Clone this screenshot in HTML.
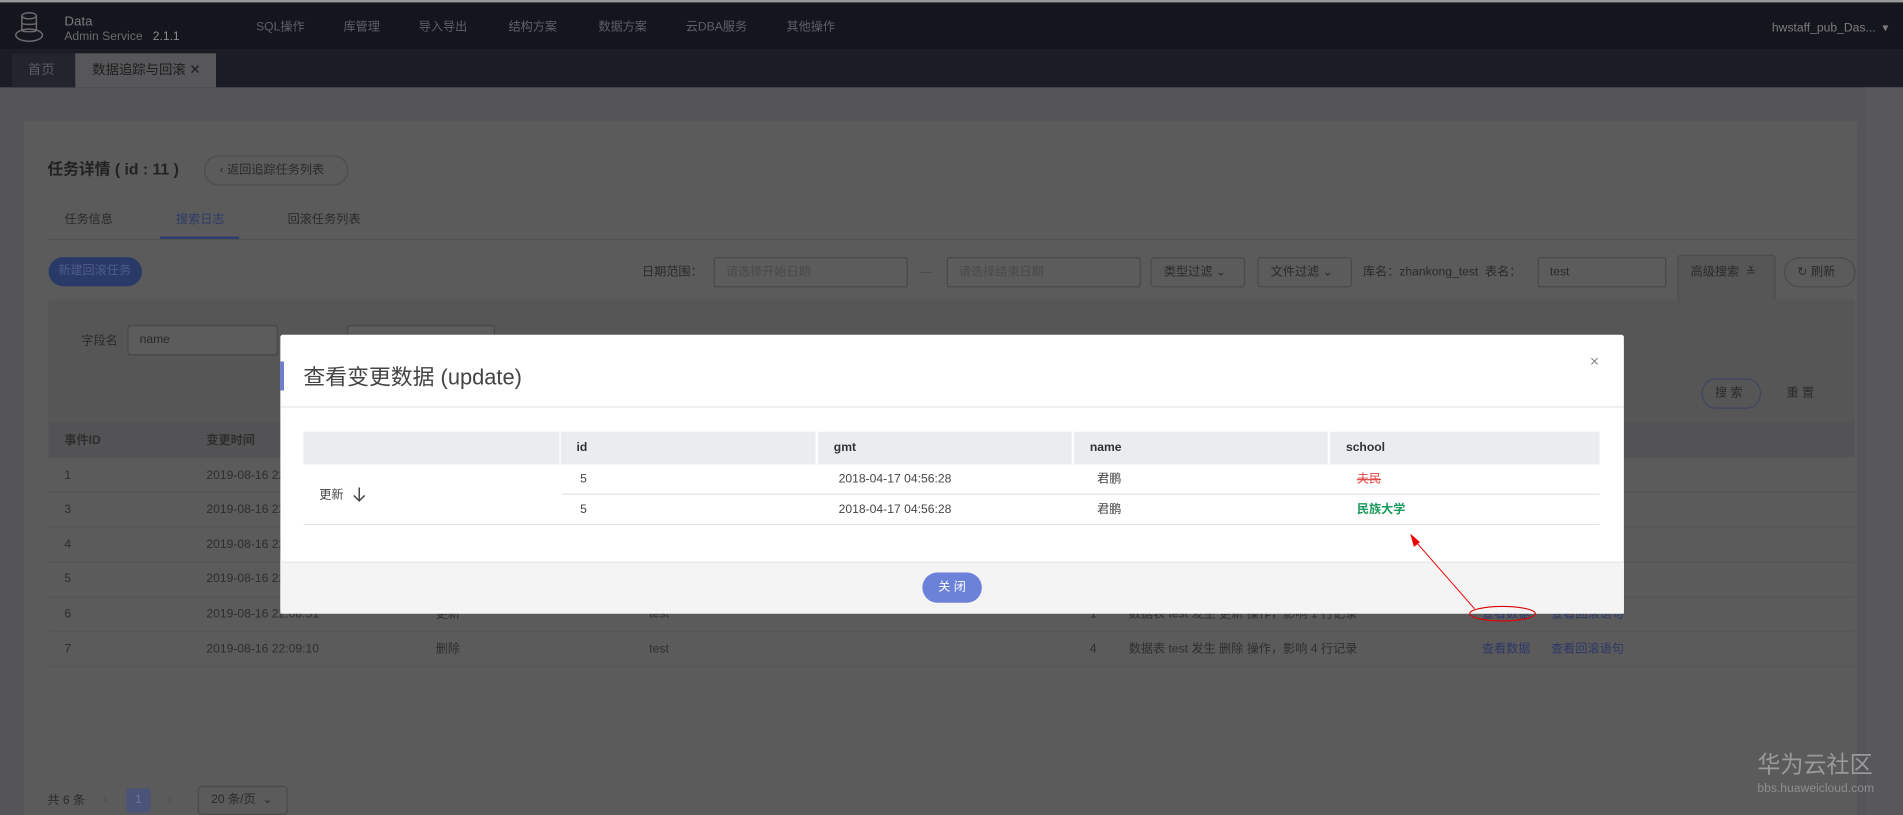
<!DOCTYPE html>
<html><head><meta charset="utf-8">
<style>
*{box-sizing:border-box;margin:0;padding:0}
html,body{width:1903px;height:815px;overflow:hidden;background:#555558}
#s{position:absolute;left:0;top:0;width:1568px;height:672px;transform:scale(1.21365,1.21280);transform-origin:0 0;font-family:"Liberation Sans","Noto Sans CJK SC",sans-serif;font-size:10px;color:#2a2a2a;line-height:1.15}
.a{position:absolute;white-space:nowrap}
.f{display:flex;align-items:center}
.nav{left:0;top:0;width:1568px;height:41px;background:#15161d;border-top:2px solid #999}
.m{top:17px;color:#5e6068;font-size:10px}
.inp{border:1px solid #484848;border-radius:2px;background:#5c5c5c;height:25px;color:#444;padding:0 9px;font-size:10px;display:flex;align-items:center}
.btn{border:1px solid #4a4a4a;border-radius:3px;height:25px;padding:0 10px;font-size:10px;color:#2a2a2a;display:flex;align-items:center}
.row{left:40px;width:1488px;height:29px;border-bottom:1px solid #555}
.c{font-size:10px;color:#2e2e2e}
.mh{top:356px;height:27px;background:#eaecf0}
</style></head><body><div id="s">
<div class="a nav"></div>
<svg class="a" style="left:11px;top:8px" width="26" height="28" viewBox="0 0 26 28" fill="none" stroke="#6a6a70" stroke-width="1.2"><ellipse cx="13" cy="5" rx="6" ry="2.5"/><path d="M7 5v12M19 5v12M7 11c0 1.5 12 1.5 12 0M7 17c0 1.5 12 1.5 12 0"/><ellipse cx="13" cy="21" rx="11" ry="5"/></svg>
<div class="a" style="left:53px;top:12px;color:#7a7a80;font-size:11px">Data</div>
<div class="a" style="left:53px;top:25px;color:#6a6a70;font-size:10px">Admin Service &nbsp;&nbsp;<span style="color:#8a8a90">2.1.1</span></div>
<div class="a m" style="left:211px">SQL操作</div><div class="a m" style="left:283px">库管理</div><div class="a m" style="left:345px">导入导出</div><div class="a m" style="left:419px">结构方案</div><div class="a m" style="left:493px">数据方案</div><div class="a m" style="left:565px">云DBA服务</div><div class="a m" style="left:648px">其他操作</div>
<div class="a" style="left:1460px;top:18px;color:#7c7c80;font-size:10px">hwstaff_pub_Das... &nbsp;▾</div>
<div class="a" style="left:0;top:41px;width:1568px;height:31px;background:#1b1c25"></div>
<div class="a f" style="left:10px;top:44px;width:52px;height:28px;background:#23242e;color:#5c5c64;padding:0 13px;font-size:11px">首页</div>
<div class="a f" style="left:62px;top:44px;width:116px;height:28px;background:#57575a;color:#1e1e1e;padding:0 14px;font-size:11px">数据追踪与回滚 ✕</div>
<div class="a" style="left:1538px;top:72px;width:30px;height:600px;background:#58585b"></div>
<div class="a" style="left:20px;top:100px;width:1510px;height:572px;background:#5b5b5c"></div>
<div class="a" style="left:39px;top:133px;font-size:13px;font-weight:bold;color:#222">任务详情 ( id : 11 )</div>
<div class="a f" style="left:168px;top:128px;width:119px;height:25px;border:1px solid #4c4c4c;border-radius:13px;padding:0 12px;font-size:10px;color:#2a2a2a">‹ 返回追踪任务列表</div>
<div class="a" style="left:53px;top:176px">任务信息</div>
<div class="a" style="left:145px;top:176px;color:#2d3a66">搜索日志</div>
<div class="a" style="left:237px;top:176px">回滚任务列表</div>
<div class="a" style="left:39px;top:197px;width:1489px;height:1px;background:#525252"></div>
<div class="a" style="left:132px;top:195px;width:65px;height:2px;background:#2e3d70"></div>
<div class="a f" style="left:40px;top:212px;width:77px;height:24px;background:#2a3a68;border-radius:12px;color:#4e5c86;padding:0 8px;font-size:10px">新建回滚任务</div>
<div class="a" style="left:529px;top:219px">日期范围：</div>
<div class="a inp" style="left:588px;top:212px;width:160px;color:#4a4a4a">请选择开始日期</div>
<div class="a" style="left:758px;top:219px;color:#4a4a4a">—</div>
<div class="a inp" style="left:780px;top:212px;width:160px;color:#4a4a4a">请选择结束日期</div>
<div class="a btn" style="left:948px;top:212px;width:78px">类型过滤 ⌄</div>
<div class="a btn" style="left:1036px;top:212px;width:78px">文件过滤 ⌄</div>
<div class="a" style="left:1123px;top:219px">库名：zhankong_test &nbsp;表名：</div>
<div class="a inp" style="left:1267px;top:212px;width:106px;color:#2a2a2a">test</div>
<div class="a" style="left:40px;top:247px;width:1488px;height:129px;background:#565657"></div>
<div class="a btn" style="left:1382px;top:210px;width:81px;height:38px;background:#565657;border-bottom:none;padding-bottom:10px">高级搜索 &nbsp;≚</div>
<div class="a btn" style="left:1470px;top:212px;width:59px;border-radius:13px">↻ 刷新</div>
<div class="a" style="left:67px;top:276px">字段名</div>
<div class="a inp" style="left:105px;top:268px;width:124px;color:#2a2a2a">name</div>
<div class="a inp" style="left:286px;top:268px;width:122px"></div>
<div class="a btn" style="left:1402px;top:312px;width:49px;border-radius:12px;border-color:#3f4660">搜 索</div>
<div class="a btn" style="left:1461px;top:312px;width:48px;border-radius:8px;border-color:#555">重 置</div>
<div class="a" style="left:40px;top:348px;width:1488px;height:29px;background:#535355"></div>
<div class="a c" style="left:53px;top:358px;font-weight:bold">事件ID</div><div class="a c" style="left:170px;top:358px;font-weight:bold">变更时间</div>
<div class="a row" style="top:377px"></div><div class="a c" style="left:53px;top:387px">1</div><div class="a c" style="left:170px;top:387px">2019-08-16 22:09:10</div>
<div class="a row" style="top:406px"></div><div class="a c" style="left:53px;top:415px">3</div><div class="a c" style="left:170px;top:415px">2019-08-16 22:09:10</div>
<div class="a row" style="top:435px"></div><div class="a c" style="left:53px;top:444px">4</div><div class="a c" style="left:170px;top:444px">2019-08-16 22:09:10</div>
<div class="a row" style="top:464px"></div><div class="a c" style="left:53px;top:472px">5</div><div class="a c" style="left:170px;top:472px">2019-08-16 22:09:10</div>
<div class="a row" style="top:492px"></div><div class="a c" style="left:53px;top:501px">6</div><div class="a c" style="left:170px;top:501px">2019-08-16 22:08:51</div><div class="a c" style="left:359px;top:501px">更新</div><div class="a c" style="left:535px;top:501px">test</div><div class="a c" style="left:898px;top:501px">1</div><div class="a c" style="left:930px;top:501px">数据表 test 发生 更新 操作，影响 1 行记录</div><div class="a c" style="left:1221px;top:501px;color:#2d3766">查看数据</div><div class="a c" style="left:1278px;top:501px;color:#2d3766">查看回滚语句</div>
<div class="a row" style="top:521px"></div><div class="a c" style="left:53px;top:530px">7</div><div class="a c" style="left:170px;top:530px">2019-08-16 22:09:10</div><div class="a c" style="left:359px;top:530px">删除</div><div class="a c" style="left:535px;top:530px">test</div><div class="a c" style="left:898px;top:530px">4</div><div class="a c" style="left:930px;top:530px">数据表 test 发生 删除 操作，影响 4 行记录</div><div class="a c" style="left:1221px;top:530px;color:#2d3766">查看数据</div><div class="a c" style="left:1278px;top:530px;color:#2d3766">查看回滚语句</div>
<div class="a" style="left:39px;top:655px">共 6 条</div>
<div class="a" style="left:85px;top:654px;color:#4e4e4e">‹</div>
<div class="a f" style="left:104px;top:650px;width:20px;height:20px;background:#4a5478;border-radius:2px;color:#6c76a0;justify-content:center">1</div>
<div class="a" style="left:138px;top:654px;color:#4e4e4e">›</div>
<div class="a btn" style="left:163px;top:648px;width:74px;height:24px">20 条/页 &nbsp;⌄</div>
<div class="a" style="left:1448px;top:621px;font-size:19px;color:#9a9a9c">华为云社区</div>
<div class="a" style="left:1448px;top:645px;font-size:10px;color:#8e8e90">bbs.huaweicloud.com</div>
<!-- modal -->
<div class="a" style="left:231px;top:276px;width:1107px;height:230px;background:#fff;border-radius:2px"></div>
<div class="a" style="left:231px;top:298px;width:3px;height:24px;background:#6a7fd2"></div>
<div class="a" style="left:250px;top:301px;font-size:18px;color:#444">查看变更数据 (update)</div>
<div class="a" style="left:1310px;top:291px;font-size:13px;color:#888">×</div>
<div class="a" style="left:231px;top:335px;width:1107px;height:1px;background:#e6e6e6"></div>
<div class="a mh" style="left:250px;width:211px"></div><div class="a mh" style="left:462px;width:210px"></div><div class="a mh" style="left:674px;width:209px"></div><div class="a mh" style="left:885px;width:209px"></div><div class="a mh" style="left:1096px;width:222px"></div>
<div class="a" style="left:475px;top:364px;font-weight:bold;color:#333">id</div>
<div class="a" style="left:687px;top:364px;font-weight:bold;color:#333">gmt</div>
<div class="a" style="left:898px;top:364px;font-weight:bold;color:#333">name</div>
<div class="a" style="left:1109px;top:364px;font-weight:bold;color:#333">school</div>
<div class="a" style="left:463px;top:407px;width:855px;height:1px;background:#e4e4e4"></div>
<div class="a" style="left:250px;top:432px;width:1068px;height:1px;background:#e4e4e4"></div>
<div class="a" style="left:263px;top:403px;color:#444">更新</div>
<svg class="a" style="left:290px;top:401px" width="12" height="13" viewBox="0 0 12 13" fill="none" stroke="#444" stroke-width="1.2"><path d="M6 1v11M1.5 7.5L6 12l4.5-4.5"/></svg>
<div class="a" style="left:478px;top:390px;color:#444">5</div><div class="a" style="left:691px;top:390px;color:#444">2018-04-17 04:56:28</div><div class="a" style="left:904px;top:390px;color:#444">君鹏</div><div class="a" style="left:1118px;top:390px;color:#e04646;text-decoration:line-through">夫民</div>
<div class="a" style="left:478px;top:415px;color:#444">5</div><div class="a" style="left:691px;top:415px;color:#444">2018-04-17 04:56:28</div><div class="a" style="left:904px;top:415px;color:#444">君鹏</div><div class="a" style="left:1118px;top:415px;color:#1d9a5e;font-weight:bold">民族大学</div>
<div class="a" style="left:231px;top:463px;width:1107px;height:43px;background:#f4f4f5;border-top:1px solid #e6e6e6"></div>
<div class="a f" style="left:760px;top:472px;width:49px;height:25px;background:#6b82d8;border-radius:13px;color:#fff;justify-content:center;font-size:10px">关 闭</div>
<svg class="a" style="left:0;top:0" width="1568" height="672"><line x1="1215" y1="502" x2="1166" y2="446" stroke="#e00" stroke-width="0.8"/><polygon points="1162,440 1170,447 1165,451" fill="#e00"/><ellipse cx="1238" cy="506" rx="27" ry="6" fill="none" stroke="#d00" stroke-width="0.9"/></svg>
</div></body></html>
